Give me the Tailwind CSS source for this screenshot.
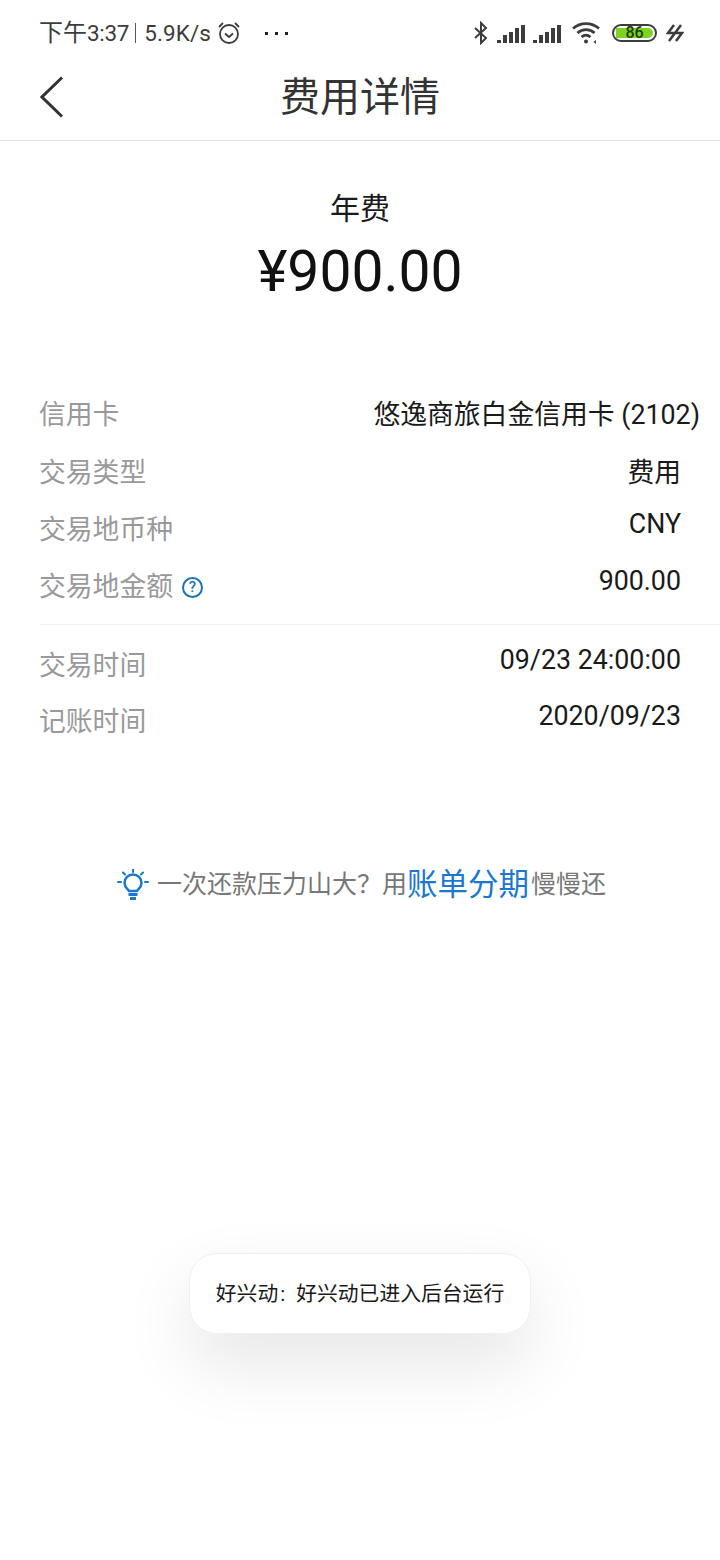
<!DOCTYPE html>
<html lang="zh-CN">
<head>
    <meta charset="UTF-8">
    <title>费用详情</title>
    <script src="https://cdn.jsdelivr.net/npm/@tailwindcss/browser@4"></script>
</head>
<body>
<div class="relative h-[1560px] w-[720px] overflow-hidden bg-white font-['Roboto','Noto_Sans_CJK_SC',sans-serif] text-[#1a1a1a]">
    <!-- Status bar -->
    <div class="flex h-[66px] items-center justify-between pl-[39px] pr-[36px] text-[#3c3c3c]">
        <div class="flex items-center text-[22.500px] leading-none">
            <span class="text-[24px]">下午</span>
            <span class="tracking-[-0.3px]">3:37</span>
            <span class="ml-[6px] mr-[8px] h-5 w-px bg-[#555]"></span>
            <span class="tracking-[0.1px]">5.9K/s</span>
            <svg class="ml-[6px] h-6 w-6" viewBox="0 0 24 24" fill="none" stroke="#3c3c3c" stroke-width="1.800">
                <circle cx="12" cy="13" r="9"/>
                <path d="M8 12.500l4 3.500 4-3.500M2 6l4-4M22 6l-4-4"/>
            </svg>
            <div class="ml-[24px] flex gap-[7px]">
                <span class="h-[3px] w-[3px] bg-[#222]"></span>
                <span class="h-[3px] w-[3px] bg-[#222]"></span>
                <span class="h-[3px] w-[3px] bg-[#222]"></span>
            </div>
        </div>
        <div class="flex items-center">
            <svg class="h-6 w-4" viewBox="0 0 16 24" fill="none" stroke="#3c3c3c" stroke-width="2">
                <path d="M2 7l11 10-5 5V2l5 5L2 17"/>
            </svg>
            <svg class="ml-[8px] h-5 w-7" viewBox="0 0 28 20" fill="#3c3c3c">
                <rect x="0" y="17" width="4" height="3"/><rect x="6" y="12" width="4" height="8"/><rect x="12" y="9" width="4" height="11"/><rect x="18" y="5" width="4" height="15"/><rect x="24" y="2" width="4" height="18"/>
            </svg>
            <svg class="ml-[8px] h-5 w-7" viewBox="0 0 28 20" fill="#3c3c3c">
                <rect x="0" y="17" width="4" height="3"/><rect x="6" y="12" width="4" height="8"/><rect x="12" y="9" width="4" height="11"/><rect x="18" y="5" width="4" height="15"/><rect x="24" y="2" width="4" height="18"/>
            </svg>
            <svg class="ml-[11px] h-6 w-7" viewBox="0 0 28 24" fill="none" stroke="#3c3c3c" stroke-width="2.800">
                <path d="M1 7.500C8.500 1 19.500 1 27 7.500M5.500 12c5-4.500 12-4.500 17 0M9.500 16c3-2.500 6-2.500 9 0"/>
                <circle cx="14" cy="20.500" r="2" fill="#3c3c3c" stroke="none"/>
                <path d="M24 19v4l-2.500-2z" fill="#3c3c3c" stroke="none"/>
            </svg>
            <div class="ml-[12px] flex h-[18px] w-[45px] items-center rounded-full border-2 border-[#3c3c3c] p-[2px]">
                <div class="flex h-full w-[37px] items-center justify-center rounded-l-[3px] rounded-r-full bg-[#7ed321] text-[16px] leading-none font-medium text-[#1a3d00]">86</div>
            </div>
            <svg class="ml-[8px] h-5 w-[19px]" viewBox="0 0 19 20" fill="none" stroke="#3c3c3c" stroke-width="2.500">
                <path d="M9 2L3 10h7l-6 8M16 2l-6 8h7l-6 8"/>
            </svg>
        </div>
    </div>

    <!-- Header -->
    <div class="relative flex h-[75px] items-center justify-center border-b border-[#e2e2e2] pb-[11px]">
        <svg class="absolute top-[10px] left-10 h-[42px] w-6" viewBox="0 0 24 42" fill="none" stroke="#333" stroke-width="3">
            <path d="M22 1.500L2 21l20 19.500"/>
        </svg>
        <h1 class="text-[40px] leading-none text-[#333]">费用详情</h1>
    </div>

    <!-- Amount -->
    <div class="pt-[50px] text-center">
        <p class="text-[30px] leading-[36px]">年费</p>
        <p class="mt-[13px] text-[57px] leading-[64px] text-[#111]">¥900.00</p>
    </div>

    <!-- Detail rows -->
    <div class="mt-[82px] pl-[39px] text-[26.800px]">
        <div class="flex h-[59px] items-center justify-between pr-5">
            <span class="text-[#999]">信用卡</span>
            <span>悠逸商旅白金信用卡 (2102)</span>
        </div>
        <div class="flex h-[57px] items-center justify-between pr-[39px]">
            <span class="text-[#999]">交易类型</span>
            <span>费用</span>
        </div>
        <div class="flex h-[57px] items-center justify-between pr-[39px]">
            <span class="text-[#999]">交易地币种</span>
            <span class="mb-3">CNY</span>
        </div>
        <div class="flex h-[57px] items-center justify-between pr-[39px]">
            <span class="flex items-center text-[#999]">交易地金额
                <span class="ml-[9px] flex h-[21px] w-[21px] items-center justify-center rounded-full border-2 border-[#1a72b0] text-[15px] leading-none font-medium text-[#1a72b0]">?</span>
            </span>
            <span class="mb-3">900.00</span>
        </div>
        <div class="mt-[8px] border-t border-[#f0f0f0] pt-[13px]">
            <div class="flex h-[56px] items-center justify-between pr-[39px]">
                <span class="text-[#999]">交易时间</span>
                <span class="mb-3">09/23 24:00:00</span>
            </div>
            <div class="flex h-[56px] items-center justify-between pr-[39px]">
                <span class="text-[#999]">记账时间</span>
                <span class="mb-3">2020/09/23</span>
            </div>
        </div>
    </div>

    <!-- Installment tip -->
    <div class="mt-[117px] flex items-center justify-center pl-[3px] text-[25px] leading-[36px] text-[#777]">
        <svg class="mr-[8px] h-8 w-8" viewBox="0 0 32 32" fill="none" stroke="#1a78d2" stroke-width="2.500">
            <path d="M12 22c-1-2-4.500-3.500-4.500-8a8.500 8.500 0 0 1 17 0c0 4.500-3.500 6-4.500 8z"/>
            <path d="M11.500 25.500h9M13 29.500h6" stroke-width="2.800"/>
            <path d="M16 0v3M6 3.500l2 2M26 3.500l-2 2M1 13h3M28 13h3" stroke-linecap="round" stroke-width="2"/>
        </svg>
        <span>一次还款压力山大？用</span>
        <span class="text-[30.500px] text-[#1a78d2]">账单分期</span>
        <span class="ml-[2px]">慢慢还</span>
    </div>

    <!-- Toast -->
    <div class="absolute top-[1253px] left-[189px] flex h-[81px] w-[342px] items-center justify-center rounded-[28px] border border-[#f0f0f0] bg-white pt-[2px] text-[20.800px] text-[#1a1a1a] shadow-[0_30px_70px_rgba(0,0,0,0.1)]">
        <span>好兴动<span class="ml-[2px] mr-[11px]">:</span>好兴动已进入后台运行</span>
    </div>
</div>
</body>
</html>
